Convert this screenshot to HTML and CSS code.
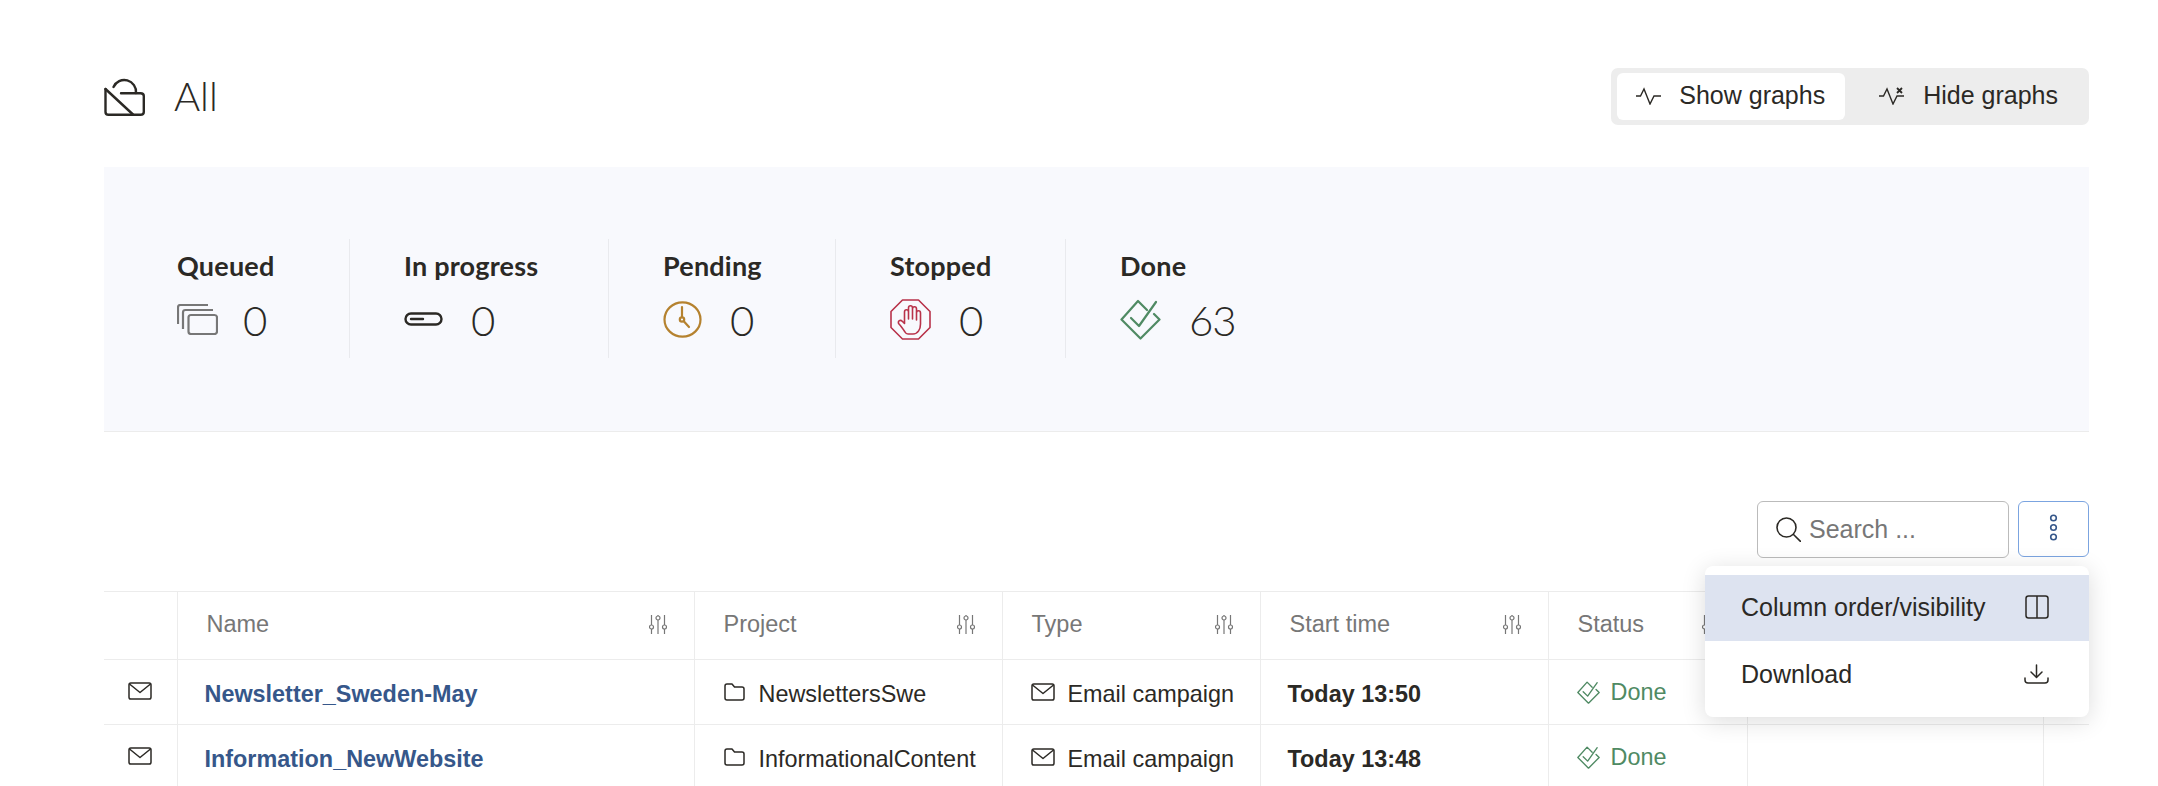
FILE: index.html
```html
<!DOCTYPE html>
<html lang="en">
<head>
    <meta charset="UTF-8">
    <title>All</title>
    <link rel="stylesheet" href="styles.css">
</head>
<body>

<div class="page">
    <div class="top">
        <div class="title">
            <svg class="title-icon" viewBox="0 0 41 38" fill="none" stroke="#2b2925" stroke-width="2.4" stroke-linecap="round" stroke-linejoin="round">
                <path d="M1.5 11 V34 Q1.5 36.8 4.5 36.8 H36.5 Q39.8 36.8 39.8 34 V18 Q39.8 15.2 36.5 15.2 H17"/>
                <path d="M9.5 9 A11.8 11.8 0 0 1 32 15"/>
                <path d="M1.5 11 L29 36.5"/>
            </svg>
            <span class="title-text">All</span>
        </div>
        <div class="toggle">
            <button class="toggle-btn active">
                <svg width="25" height="18" viewBox="0 0 25 18" fill="none" stroke="#2b2925" stroke-width="1.4"><path d="M0 9 H4.5 L8 2 L14 17 L18 9 H25"/></svg>
                Show graphs
            </button>
            <button class="toggle-btn">
                <svg width="25" height="18" viewBox="0 0 25 18" fill="none" stroke="#2b2925" stroke-width="1.4"><path d="M0 9 H4.5 L8 2 L14 17 L18 9 H25"/><path d="M18 1 L23 6 M23 1 L18 6" stroke-width="1.8"/></svg>
                Hide graphs
            </button>
        </div>
    </div>

    <div class="stats">
        <div class="stat">
            <div class="stat-label">Queued</div>
            <div class="stat-row tight">
                <svg class="stat-icon" width="41" height="31" viewBox="0 0 41 31" fill="none" stroke="#777" stroke-width="2.2" stroke-linejoin="round">
                    <rect x="11.5" y="11" width="28.5" height="19" rx="2.5"/>
                    <path d="M6 25 V8.5 Q6 6 8.5 6 H36"/>
                    <path d="M1 20 V3.5 Q1 1 3.5 1 H31"/>
                </svg>
                <span class="stat-value">0</span>
            </div>
        </div>
        <div class="stat">
            <div class="stat-label">In progress</div>
            <div class="stat-row">
                <svg class="stat-icon" width="39" height="31" viewBox="0 0 39 31" fill="none" stroke="#2b2925" stroke-width="2.4" stroke-linecap="round">
                    <rect x="1.5" y="9.5" width="36" height="11" rx="5.5"/>
                    <path d="M7 15 H19"/>
                </svg>
                <span class="stat-value">0</span>
            </div>
        </div>
        <div class="stat">
            <div class="stat-label">Pending</div>
            <div class="stat-row">
                <svg class="stat-icon" width="39" height="37" viewBox="0 0 39 37" fill="none" stroke="#b5822f" stroke-width="2.2" stroke-linecap="round">
                    <ellipse cx="19.5" cy="18.5" rx="18" ry="17.2"/>
                    <path d="M19 6 V16"/>
                    <circle cx="19" cy="18.5" r="2.2"/>
                    <path d="M21 20.5 L26 26"/>
                </svg>
                <span class="stat-value">0</span>
            </div>
        </div>
        <div class="stat">
            <div class="stat-label">Stopped</div>
            <div class="stat-row">
                <svg class="stat-icon" width="41" height="41" viewBox="0 0 41 41" fill="none" stroke="#b8324a" stroke-width="1.6" stroke-linejoin="round">
                    <path d="M12.5 1 H28.5 L40 12.5 V28.5 L28.5 40 H12.5 L1 28.5 V12.5 Z"/>
                    <path d="M15 33 C13 30 11 27 9 25 C7 22.5 10 20 12.5 22.5 L14.5 24.5 V13 C14.5 10 18.5 10 18.5 13 V20 V9 C18.5 6 22.5 6 22.5 9 V20 V10 C22.5 7 26.5 7 26.5 10 V21 V14 C26.5 11 30.5 11 30.5 14 V25 C30.5 30 28 35 23 35 H18 C16.5 35 15.5 34 15 33 Z"/>
                </svg>
                <span class="stat-value">0</span>
            </div>
        </div>
        <div class="stat last">
            <div class="stat-label">Done</div>
            <div class="stat-row">
                <svg class="stat-icon" width="41" height="41" viewBox="0 0 41 41" fill="none" stroke="#4f8a63" stroke-width="2.2" stroke-linecap="round" stroke-linejoin="round">
                    <path d="M27 11 L18 2 L1.5 20.5 L20.5 39.5 L39.5 20.5 L34 15"/>
                    <path d="M11 19 L19 27 L36 3"/>
                </svg>
                <span class="stat-value">63</span>
            </div>
        </div>
    </div>

    <div class="toolbar">
        <div class="search">
            <svg width="25" height="25" viewBox="0 0 25 25" fill="none" stroke="#2b2925" stroke-width="1.6" stroke-linecap="round"><circle cx="10.5" cy="10.5" r="9.5"/><path d="M17.5 17.5 L24.5 24.5"/></svg>
            <span class="search-text">Search ...</span>
        </div>
        <button class="more">
            <svg width="9" height="27" viewBox="0 0 9 27" fill="none" stroke="#36578a" stroke-width="1.6"><circle cx="4.5" cy="4" r="2.8"/><circle cx="4.5" cy="13.5" r="2.8"/><circle cx="4.5" cy="23" r="2.8"/></svg>
        </button>
        <div class="menu">
            <div class="menu-item hover">
                Column order/visibility
                <svg width="24" height="24" viewBox="0 0 24 24" fill="none" stroke="#2b2925" stroke-width="1.5"><rect x="1" y="1" width="22" height="22" rx="2.5"/><path d="M12 1 V23"/></svg>
            </div>
            <div class="menu-item">
                Download
                <svg width="25" height="20" viewBox="0 0 25 20" fill="none" stroke="#2b2925" stroke-width="1.5" stroke-linecap="round" stroke-linejoin="round"><path d="M12.5 1 V13 M7 8 L12.5 13.5 L18 8"/><path d="M1 14 V16 Q1 19 4 19 H21 Q24 19 24 16 V14"/></svg>
            </div>
        </div>
    </div>

    <table class="grid">
        <colgroup>
            <col class="c-icon"><col class="c-name"><col class="c-project"><col class="c-type"><col class="c-time"><col class="c-status"><col class="c-blank"><col class="c-end">
        </colgroup>
        <thead>
            <tr>
                <th></th>
                <th><div class="th-in">Name <svg class="sliders"><use href="#sliders"/></svg></div></th>
                <th><div class="th-in">Project <svg class="sliders"><use href="#sliders"/></svg></div></th>
                <th><div class="th-in">Type <svg class="sliders"><use href="#sliders"/></svg></div></th>
                <th><div class="th-in">Start time <svg class="sliders"><use href="#sliders"/></svg></div></th>
                <th><div class="th-in">Status <svg class="sliders"><use href="#sliders"/></svg></div></th>
                <th></th>
                <th></th>
            </tr>
        </thead>
        <tbody>
            <tr>
                <td class="mail-cell"><svg class="mail"><use href="#mail"/></svg></td>
                <td class="name-cell"><a class="name" href="#">Newsletter_Sweden-May</a></td>
                <td><div class="cell"><svg class="folder"><use href="#folder"/></svg>NewslettersSwe</div></td>
                <td><div class="cell type"><svg class="mail"><use href="#mail"/></svg>Email campaign</div></td>
                <td class="time">Today 13:50</td>
                <td><div class="cell done"><svg class="check"><use href="#check"/></svg>Done</div></td>
                <td></td>
                <td></td>
            </tr>
            <tr>
                <td class="mail-cell"><svg class="mail"><use href="#mail"/></svg></td>
                <td class="name-cell"><a class="name" href="#">Information_NewWebsite</a></td>
                <td><div class="cell"><svg class="folder"><use href="#folder"/></svg>InformationalContent</div></td>
                <td><div class="cell type"><svg class="mail"><use href="#mail"/></svg>Email campaign</div></td>
                <td class="time">Today 13:48</td>
                <td><div class="cell done"><svg class="check"><use href="#check"/></svg>Done</div></td>
                <td></td>
                <td></td>
            </tr>
        </tbody>
    </table>
</div>

<!-- shared icons -->
<svg class="defs" width="0" height="0">
    <symbol id="sliders" viewBox="0 0 18 19" fill="none" stroke="#777" stroke-width="1.2">
        <path d="M2.5 0 V10 M2.5 14 V19 M9 0 V1 M9 5 V19 M15.5 0 V10 M15.5 14 V19"/>
        <circle cx="2.5" cy="12" r="2"/><circle cx="9" cy="3" r="2"/><circle cx="15.5" cy="12" r="2"/>
    </symbol>
    <symbol id="mail" viewBox="0 0 24 18" fill="none" stroke="#2b2925" stroke-width="1.5" stroke-linejoin="round">
        <rect x="1" y="1" width="22" height="16" rx="1.8"/>
        <path d="M1.5 2 L12 10.5 L22.5 2"/>
    </symbol>
    <symbol id="folder" viewBox="0 0 21 18" fill="none" stroke="#2b2925" stroke-width="1.5" stroke-linejoin="round">
        <path d="M1 3 Q1 1 3 1 H8 L10.5 4 H18 Q20 4 20 6 V15 Q20 17 18 17 H3 Q1 17 1 15 Z"/>
    </symbol>
    <symbol id="check" viewBox="0 0 41 41" fill="none" stroke="#4f8a63" stroke-width="2.4" stroke-linecap="round" stroke-linejoin="round">
        <path d="M27 11 L18 2 L1.5 20.5 L20.5 39.5 L39.5 20.5 L34 15"/>
        <path d="M11 19 L19 27 L36 3"/>
    </symbol>
</svg>

</body>
</html>
```

FILE: styles.css
```css
html, body {
    margin: 0;
    height: 100%;
    overflow: hidden;
    background-color: white;
}

body {
    font-family: "Liberation Sans", Arial, sans-serif;
    color: #2b2925;
}

.page {
    padding: 68px 69px 0 104px;
}

.defs {
    position: absolute;
}

/* top row */
.top {
    display: flex;
    justify-content: space-between;
    align-items: center;
    height: 57px;
}

.title {
    display: flex;
    align-items: center;
    gap: 29px;
}

.title-icon {
    width: 41px;
    height: 38px;
}

.title-text {
    margin-top: -2px;
    font-family: Lato, sans-serif;
    font-weight: 300;
    font-size: 40px;
}

.toggle {
    display: flex;
    padding: 5px 6px;
    gap: 6px;
    background-color: #ededed;
    border-radius: 7px;
}

.toggle-btn {
    display: flex;
    align-items: center;
    gap: 19px;
    box-sizing: border-box;
    height: 47px;
    padding: 0 25px 2px 28px;
    border: none;
    border-radius: 6px;
    background: none;
    color: #2b2925;
    font-family: inherit;
    font-size: 25px;
}

.toggle-btn.active {
    gap: 18px;
    padding: 0 20px 2px 19px;
    background-color: white;
}

/* stats panel */
.stats {
    display: grid;
    grid-template-columns: 173px 259px 227px 230px 1fr;
    height: 192px;
    margin-top: 42px;
    padding: 72px 0 0 73px;
    background-color: #f8f9fd;
    border-bottom: 1px solid #ececec;
}

.stat {
    box-sizing: border-box;
    height: 119px;
    padding-left: 54px;
    border-right: 1px solid #e9eaee;
    font-family: Lato, sans-serif;
}

.stat:first-child {
    padding-left: 0;
}

.stat.last {
    border-right: none;
}

.stat-label {
    margin-top: 11px;
    font-size: 27px;
    font-weight: 700;
    letter-spacing: 0.2px;
    line-height: 32px;
}

.stat-row {
    display: flex;
    align-items: center;
    gap: 28px;
    height: 41px;
    margin-top: 17px;
}

.stat-row.tight {
    gap: 25px;
}

.stat-value {
    font-size: 42px;
    font-weight: 300;
    letter-spacing: -1px;
}

/* search row */
.toolbar {
    position: relative;
    display: flex;
    justify-content: flex-end;
    gap: 9px;
    margin-top: 69px;
}

.search {
    display: flex;
    align-items: center;
    gap: 8px;
    box-sizing: border-box;
    width: 252px;
    height: 57px;
    padding-left: 18px;
    border: 1px solid #bbb;
    border-radius: 6px;
}

.search-text {
    font-size: 25px;
    color: #777;
}

.more {
    width: 71px;
    height: 56px;
    padding: 0;
    border: 1px solid #7ba4e0;
    border-radius: 6px;
    background: white;
}

.menu {
    position: absolute;
    top: 65px;
    right: 0;
    z-index: 2;
    box-sizing: border-box;
    width: 384px;
    height: 151px;
    padding: 9px 0;
    background: white;
    border-radius: 8px;
    box-shadow: 0 4px 24px rgba(0, 0, 0, 0.14);
}

.menu-item {
    display: flex;
    justify-content: space-between;
    align-items: center;
    box-sizing: border-box;
    height: 66px;
    padding: 0 40px 0 36px;
    font-size: 25px;
}

.menu-item.hover {
    padding-bottom: 2px;
    background-color: #dde3f0;
}

/* table */
.grid {
    width: 1985px;
    margin-top: 33px;
    border-collapse: collapse;
    table-layout: fixed;
}

.c-icon { width: 73px; }
.c-name { width: 517px; }
.c-project { width: 308px; }
.c-type { width: 258px; }
.c-time { width: 288px; }
.c-status { width: 199px; }
.c-blank { width: 296px; }
.c-end { width: 46px; }

.grid th, .grid td {
    box-sizing: border-box;
    padding: 0;
    border-top: 1px solid #ececec;
    border-bottom: 1px solid #ececec;
    border-left: 1px solid #ececec;
    text-align: left;
    font-size: 23.4px;
    white-space: nowrap;
}

.grid th:first-child, .grid td:first-child {
    border-left: none;
}

.grid th {
    height: 68px;
    font-size: 23.5px;
    font-weight: normal;
    color: #777;
}

.grid td {
    height: 65px;
}

.th-in {
    display: flex;
    justify-content: space-between;
    align-items: center;
    padding: 0 27px 3px 29px;
}

.sliders {
    width: 18px;
    height: 19px;
}

.grid .mail-cell {
    padding-left: 24px;
    padding-bottom: 2px;
}

.mail {
    display: block;
    width: 24px;
    height: 18px;
    flex: none;
}

.folder {
    width: 21px;
    height: 18px;
    flex: none;
    margin-right: 1px;
}

.check {
    width: 23px;
    height: 23px;
    flex: none;
}

.grid .name-cell {
    padding-top: 5px;
}

.name {
    margin-left: 27px;
    font-weight: bold;
    color: #36578a;
    text-decoration: none;
}

.cell {
    display: flex;
    align-items: center;
    gap: 13px;
    padding: 5px 0 0 29px;
}

.cell svg {
    margin-top: -5px;
}

.cell.type {
    padding-left: 28px;
}

.grid .time {
    padding: 5px 0 0 27px;
    font-weight: bold;
}

.cell.done {
    gap: 11px;
    padding: 0 0 0 28px;
    color: #4f8a63;
}

.cell.done svg {
    margin-top: 0;
}
```
